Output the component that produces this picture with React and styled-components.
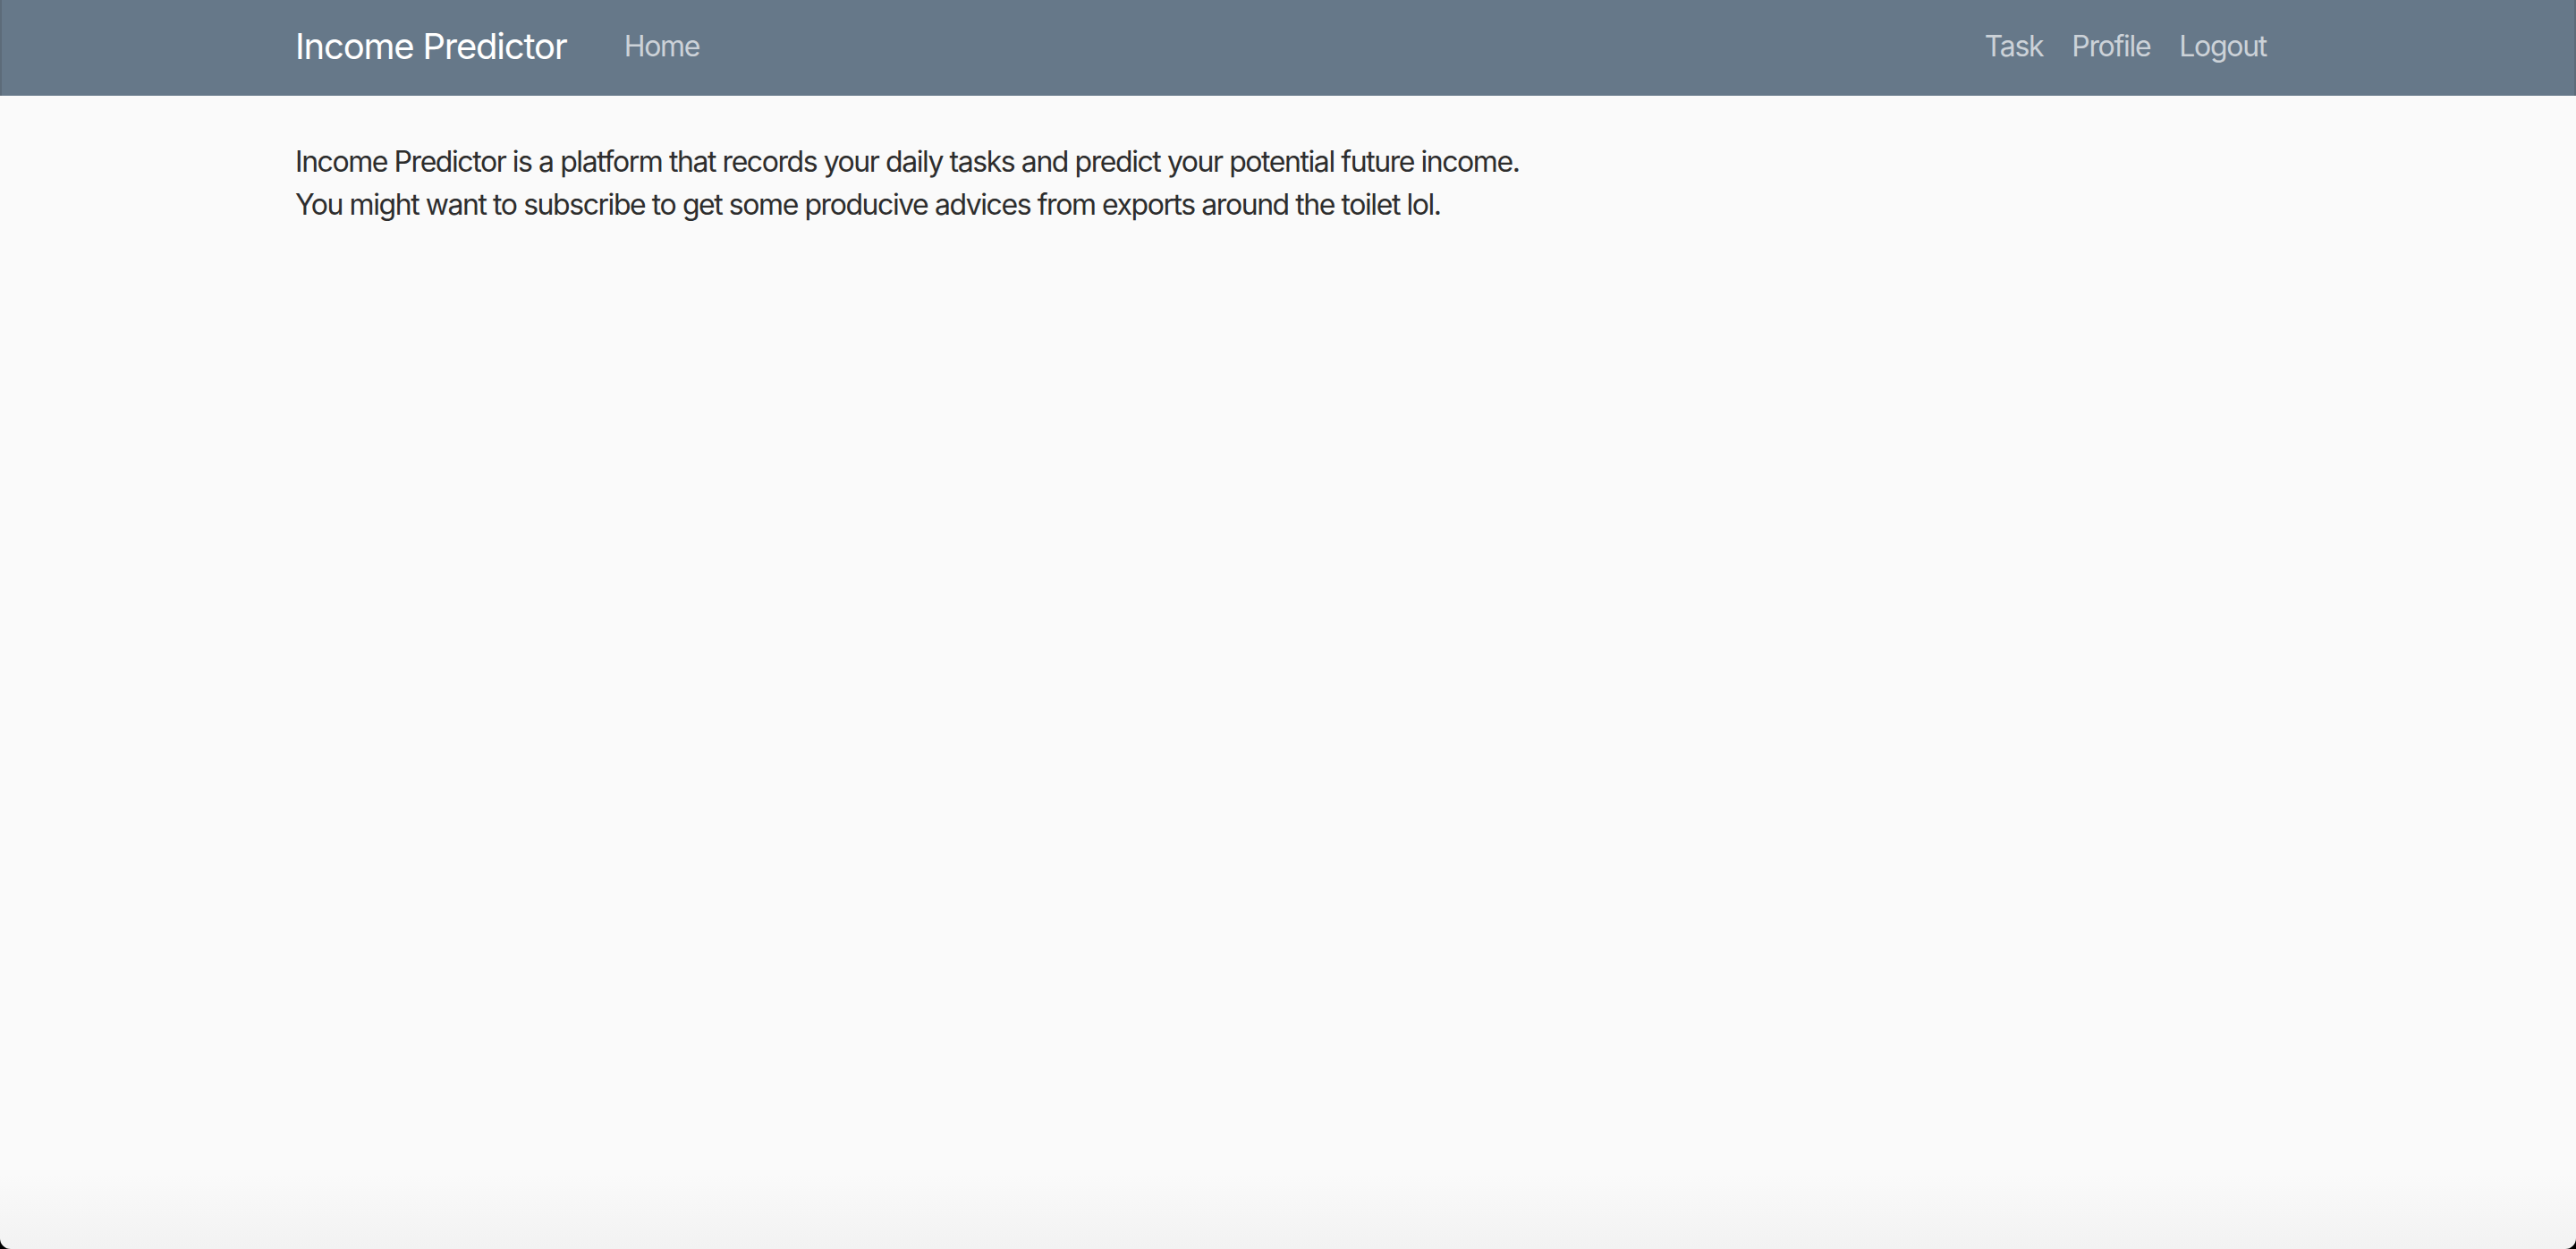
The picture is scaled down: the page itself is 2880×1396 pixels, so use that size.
import styled, { createGlobalStyle } from 'styled-components';

const GlobalStyle = createGlobalStyle`
  html, body {
    margin: 0;
    padding: 0;
    background: #000;
  }

  body {
    font-family: Inter, "Noto Sans", "Liberation Sans", sans-serif;
    -webkit-font-smoothing: antialiased;
  }
`;

const links = ['Task', 'Profile', 'Logout'];

function App() {
  return (
    <>
      <GlobalStyle />
      <Window>
        <Navbar>
          <NavContainer>
            <Brand href="#">Income Predictor</Brand>
            <NavList>
              <NavLink href="#">Home</NavLink>
            </NavList>
            <NavList $right>
              {links.map(label => (
                <NavLink key={label} href="#">
                  {label}
                </NavLink>
              ))}
            </NavList>
          </NavContainer>
        </Navbar>

        <Main>
          <Intro>
            Income Predictor is a platform that records your daily tasks and predict your potential future income.
            <br />
            You might want to subscribe to get some producive advices from exports around the toilet lol.
          </Intro>
        </Main>
      </Window>
    </>
  );
}

export default App;

const Window = styled.div`
  min-height: 100vh;
  display: flex;
  flex-direction: column;
  overflow: hidden;
  border-radius: 0 0 12px 12px;
  background: linear-gradient(to bottom, #fafafa 0%, #fafafa 94%, #f2f2f2 100%);
`;

const Navbar = styled.nav`
  height: 107px;
  background: #667889;
  border-left: 2px solid #5c6b79;
  border-right: 2px solid #5c6b79;
  box-sizing: border-box;
`;

const NavContainer = styled.div`
  box-sizing: border-box;
  max-width: 2280px;
  height: 100%;
  margin: 0 auto;
  padding: 0 30px 3px;
  display: flex;
  align-items: center;
`;

const Brand = styled.a`
  font-size: 40px;
  line-height: 60px;
  color: #ffffff;
  text-decoration: none;
  margin-right: 48px;
  letter-spacing: -1.2px;
`;

const NavList = styled.div`
  display: flex;
  align-items: center;
  margin-left: ${p => (p.$right ? 'auto' : '0')};
`;

const NavLink = styled.a`
  padding: 0 16px;
  font-size: 32px;
  line-height: 48px;
  color: #ccd2d8;
  text-decoration: none;
  letter-spacing: -1.3px;
`;

const Main = styled.main`
  box-sizing: border-box;
  width: 100%;
  max-width: 2280px;
  margin: 0 auto;
  padding: 50px 30px 0;
`;

const Intro = styled.p`
  margin: 0;
  font-size: 32px;
  line-height: 48px;
  color: #2d2d2d;
  letter-spacing: -1.44px;
`;
